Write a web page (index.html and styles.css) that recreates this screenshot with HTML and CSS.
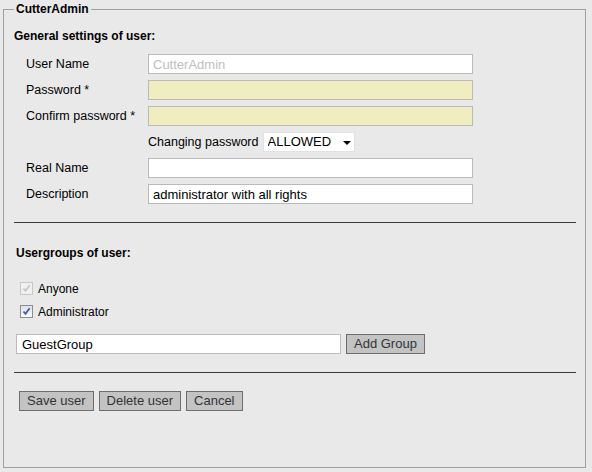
FILE: index.html
```html
<!DOCTYPE html>
<html>
<head>
<meta charset="utf-8">
<link rel="stylesheet" href="styles.css">
</head>
<body>
<fieldset class="panel">
  <legend class="panel-title">CutterAdmin</legend>
  <h3 class="section-title">General settings of user:</h3>
  <div class="form-grid">
    <label class="lbl">User Name</label>
    <input class="field" type="text" value="CutterAdmin" disabled>
    <label class="lbl">Password *</label>
    <input class="field field-pw" type="password">
    <label class="lbl">Confirm password *</label>
    <input class="field field-pw" type="password">
    <span></span>
    <div class="pw-row">
      <span class="lbl">Changing password</span>
      <span class="select-wrap">
        <select class="select"><option>ALLOWED</option></select>
      </span>
    </div>
    <label class="lbl">Real Name</label>
    <input class="field" type="text">
    <label class="lbl">Description</label>
    <input class="field" type="text" value="administrator with all rights">
  </div>
  <hr class="sep sep-first">
  <h3 class="section-title groups-title">Usergroups of user:</h3>
  <div class="checks">
    <label class="check-row">
      <span class="cb cb-disabled"><svg width="11" height="11" viewBox="0 0 11 11"><path d="M2.5 5.5 L4.5 7.8 L8.6 2.2" fill="none" stroke="#c4c4c4" stroke-width="1.6"/></svg></span>
      <span class="check-text">Anyone</span>
    </label>
    <label class="check-row">
      <span class="cb cb-on"><svg width="11" height="11" viewBox="0 0 11 11"><path d="M2.5 5.5 L4.5 7.8 L8.6 2.2" fill="none" stroke="#4b5aa0" stroke-width="1.8"/></svg></span>
      <span class="check-text">Administrator</span>
    </label>
  </div>
  <div class="add-row">
    <span class="group-box">
      <input class="field group-field" type="text" value="GuestGroup">
    </span>
    <button class="btn" type="button">Add Group</button>
  </div>
  <hr class="sep sep-second">
  <div class="actions">
    <button class="btn" type="button">Save user</button>
    <button class="btn" type="button">Delete user</button>
    <button class="btn" type="button">Cancel</button>
  </div>
</fieldset>
</body>
</html>
```
FILE: styles.css
```css
html, body {
  margin: 0;
  padding: 0;
  background: #e9e9e9;
}
body {
  font-family: "Liberation Sans", Arial, sans-serif;
  font-size: 12px;
  color: #000;
}
.panel {
  box-sizing: border-box;
  margin: 2px 0 0 3px;
  width: 583px;
  height: 466px;
  border: 1px solid #a0a0a0;
  padding: 0 9px 0 10px;
  min-width: 0;
}
.panel-title {
  font-weight: bold;
  font-size: 12px;
  line-height: 14px;
  padding: 0 2px;
  margin-left: 0;
}
.section-title {
  margin: 13px 0 0 0;
  font-size: 12px;
  line-height: 14px;
  font-weight: bold;
}
.form-grid {
  margin: 11px 0 0 12px;
  display: grid;
  grid-template-columns: 122px 325px;
  grid-auto-rows: 20px;
  row-gap: 6px;
  align-items: center;
}
.lbl {
  font-size: 12.5px;
  line-height: 14px;
}
.field {
  box-sizing: border-box;
  width: 325px;
  height: 20px;
  margin: 0;
  border: 1px solid #bababa;
  background: #fff;
  padding: 0 4px;
  font-family: "Liberation Sans", Arial, sans-serif;
  font-size: 13px;
  color: #000;
  outline: none;
  border-radius: 0;
}
.field:disabled {
  color: #c0c0c0;
  background: #fff;
}
.field-pw {
  background: #f0eec1;
}
.pw-row {
  display: flex;
  align-items: center;
  gap: 4px;
  height: 20px;
  margin-top: -1px;
}
.select-wrap {
  position: relative;
  display: inline-block;
}
.select-wrap::after {
  content: "";
  position: absolute;
  right: 4px;
  top: 9px;
  border-left: 4px solid transparent;
  border-right: 4px solid transparent;
  border-top: 4px solid #000;
  pointer-events: none;
}
.select {
  -webkit-appearance: none;
  appearance: none;
  box-sizing: border-box;
  width: 92px;
  height: 20px;
  margin: 0;
  padding: 0 0 0 4px;
  border: 1px solid #e2e2e2;
  border-radius: 0;
  background: #fff;
  font-family: "Liberation Sans", Arial, sans-serif;
  font-size: 13px;
  color: #000;
}
.sep {
  border: 0;
  border-top: 1px solid #3c3c3c;
  height: 0;
  margin: 0;
}
.sep-first {
  margin-top: 18px;
}
.groups-title {
  margin: 23px 0 0 2px;
}
.checks {
  margin: 22px 0 0 6px;
  display: flex;
  flex-direction: column;
  gap: 10px;
}
.check-row {
  display: flex;
  align-items: center;
  height: 13px;
  gap: 5px;
}
.cb {
  box-sizing: border-box;
  width: 13px;
  height: 13px;
  display: flex;
  align-items: center;
  justify-content: center;
}
.cb-disabled {
  border: 1px solid #c8c8c8;
  background: #f0f0f0;
}
.cb-on {
  border: 1px solid #8a8e96;
  background: linear-gradient(#dfe1e6, #fbfbfb);
}
.check-text {
  font-size: 12px;
  line-height: 14px;
}
.add-row {
  margin: 16px 0 0 2px;
  display: flex;
  align-items: center;
  gap: 5px;
}
.group-box {
  display: block;
}
.group-field {
  padding-left: 5px;
}
.btn {
  box-sizing: border-box;
  height: 20px;
  margin: 0;
  padding: 0 7px;
  border: 1px solid #6e6e6e;
  border-radius: 0;
  background: #c3c3c3;
  font-family: "Liberation Sans", Arial, sans-serif;
  font-size: 13px;
  color: #333;
  line-height: 18px;
}
.sep-second {
  margin-top: 18px;
}
.actions {
  margin: 18px 0 0 5px;
  display: flex;
  gap: 5px;
}
```
